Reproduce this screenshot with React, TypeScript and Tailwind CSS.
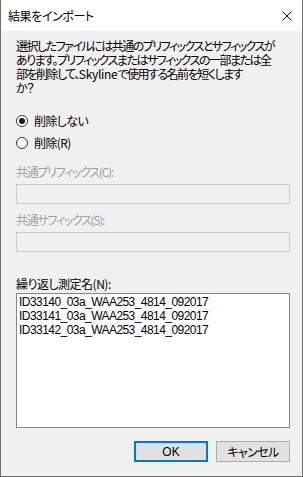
import React from "react";

const jp = "font-['Noto_Sans_CJK_JP','Noto_Sans',sans-serif] [font-feature-settings:'palt']";

function Radio({ checked, label }: { checked?: boolean; label: React.ReactNode }) {
    return (
        <div className="flex items-center h-[16px]">
            <span className="w-[12px] h-[12px] rounded-full border border-[#333333] bg-white flex items-center justify-center">
                {checked && <span className="w-[6px] h-[6px] rounded-full bg-[#1a1a1a]" />}
            </span>
            <span className="ml-[6px] text-[12px] leading-[16px] tracking-[-0.6px] text-black">{label}</span>
        </div>
    );
}

export default function App() {
    const names = [
        "ID33140_03a_WAA253_4814_092017",
        "ID33141_03a_WAA253_4814_092017",
        "ID33142_03a_WAA253_4814_092017",
    ];
    return (
        <div className={`w-[303px] h-[477px] flex flex-col border-x border-b border-[#707070] bg-[#f0f0f0] ${jp}`}>
            <div className="h-[31px] bg-white flex items-center justify-between pl-[7px] pr-[10px] shrink-0">
                <span className="text-[12px] leading-[14px] tracking-[-0.4px] text-black">結果をインポート</span>
                <svg width="10" height="10" viewBox="0 0 10 10">
                    <path d="M0.5 0.5 L9.5 9.5 M9.5 0.5 L0.5 9.5" stroke="#111" strokeWidth="1" />
                </svg>
            </div>

            <div className="flex-1 flex flex-col pl-[15px] pr-[12px] pt-[8px]">
                <p className="text-[12px] leading-[14px] tracking-[-1.5px] text-black whitespace-nowrap">
                    選択したファイルには共通のプリフィックスとサフィックスが<br />
                    あります。プリフィックスまたはサフィックスの一部または全<br />
                    部を削除して、<span className="tracking-[-0.3px]">Skyline</span>で使用する名前を短くします<br />
                    か？
                </p>

                <div className="mt-[18px] flex flex-col gap-[6px]">
                    <Radio checked label="削除しない" />
                    <Radio label="削除(R)" />
                </div>

                <label className="mt-[14px] text-[12px] leading-[14px] tracking-[-1.3px] text-[#a0a0a0]">共通プリフィックス(C):</label>
                <div className="mt-[5px] h-[20px] border border-[#cccccc] bg-[#f0f0f0]" />

                <label className="mt-[9px] text-[12px] leading-[14px] tracking-[-1.3px] text-[#a0a0a0]">共通サフィックス(S):</label>
                <div className="mt-[5px] h-[20px] border border-[#cccccc] bg-[#f0f0f0]" />

                <label className="mt-[25px] text-[12px] leading-[14px] tracking-[-0.5px] text-black">繰り返し測定名(N):</label>
                <div className="mt-[2px] h-[135px] border border-[#828790] bg-white pt-[1px] pl-[2px] font-['Liberation_Sans',sans-serif] text-[12px] leading-[14px] tracking-[-0.55px] text-black">
                    {names.map((n) => (
                        <div key={n}>{n}</div>
                    ))}
                </div>

                <div className="mt-[13px] flex justify-end gap-[8px]">
                    <button className="w-[74px] h-[21px] border-2 border-[#0078d7] bg-[#e1e1e1] text-[12px] leading-[14px] text-black font-['Liberation_Sans',sans-serif]">
                        OK
                    </button>
                    <button className="w-[74px] h-[21px] border border-[#adadad] bg-[#e1e1e1] text-[12px] leading-[14px] tracking-[-0.6px] text-black">
                        キャンセル
                    </button>
                </div>
            </div>
        </div>
    );
}
